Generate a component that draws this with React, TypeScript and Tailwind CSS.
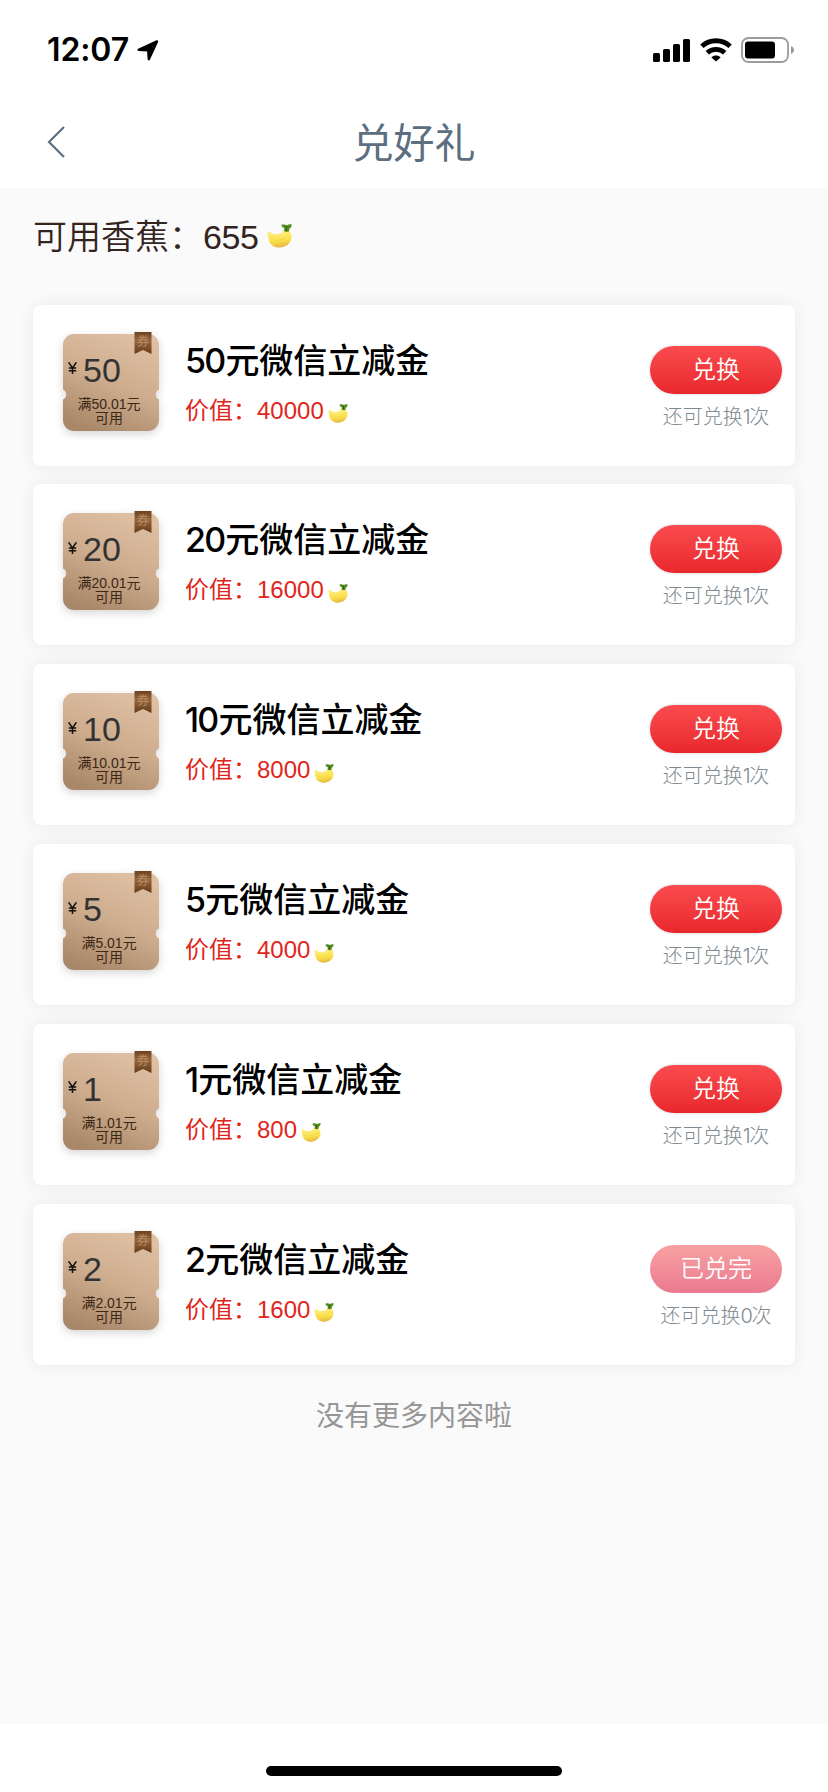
import React from 'react';

interface Gift {
    amount: string;
    limit: string;
    price: number;
    remain: number;
}

const GIFTS: Gift[] = [
    { amount: '50', limit: '50.01', price: 40000, remain: 1 },
    { amount: '20', limit: '20.01', price: 16000, remain: 1 },
    { amount: '10', limit: '10.01', price: 8000, remain: 1 },
    { amount: '5', limit: '5.01', price: 4000, remain: 1 },
    { amount: '1', limit: '1.01', price: 800, remain: 1 },
    { amount: '2', limit: '2.01', price: 1600, remain: 0 },
];

const Banana: React.FC<{ className?: string }> = ({ className }) => (
    <svg viewBox="0 0 24 23" className={className} fill="none">
        <defs>
            <linearGradient id="banana" x1="0.4" y1="0" x2="0.6" y2="1">
                <stop offset="0" stopColor="#fff08a" />
                <stop offset="0.6" stopColor="#fbe04a" />
                <stop offset="1" stopColor="#e3b443" />
            </linearGradient>
        </defs>
        <path d="M.5 8.6C.9 7.4 2.4 7 3.4 7.8C5.2 9.400 8 10.2 10.800 9.8C13.400 9.400 14.600 8 15.400 6.200L20.800 6.200C22.800 8.200 24 11 23.400 14C22.400 19 17.800 22.600 12.200 22.600C6.600 22.600 2.400 19.600 1.600 15C1.300 13 .1 10.600 .5 8.6Z" fill="url(#banana)" />
        <path d="M2.400 13.400C6.400 16.800 14.600 17 20 10.600" stroke="#e8c84a" strokeWidth=".8" opacity=".5" />
        <path d="M13.800 .8C15.800 0 17.800 .4 19.200 1.200C20.600 .2 22.400 0 23.800 .6C23.400 2.600 22.800 3.800 21.400 4.600L21.200 7C19.600 7.800 17.800 7.600 16.200 6.600L16.800 4.200C15.200 3.600 14 2.400 13.800 .8Z" fill="#548c22" />
        <path d="M18.800 2.200L18.400 6.600" stroke="#2f5f12" strokeWidth="1.2" />
    </svg>
);

const StatusBar: React.FC = () => (
    <div className="h-[98px] flex items-start justify-between pl-[47px] pr-[34px] pt-[33px]">
        <div className="flex items-center h-[34px]">
            <span className="font-['Inter',sans-serif] font-semibold text-[32px] leading-[34px] tracking-[-0.1px]">12:07</span>
            <svg viewBox="0 0 22 21" className="w-[22px] h-[21px] ml-[8px]">
                <path d="M20 1.400L11.800 19.200L11.200 10.400L1.600 9.800Z" fill="#000" stroke="#000" strokeWidth="2.4" strokeLinejoin="round" />
            </svg>
        </div>
        <div className="flex items-center h-[34px]">
            <svg viewBox="0 0 37 23" className="w-[37px] h-[23px]">
                <rect x="0" y="14" width="7" height="9" rx="1.6" />
                <rect x="10" y="10" width="7" height="13" rx="1.6" />
                <rect x="20" y="5" width="7" height="18" rx="1.6" />
                <rect x="30" y="0" width="7" height="23" rx="1.6" />
            </svg>
            <svg viewBox="0 0 32 24" className="w-[32px] h-[24px] ml-[10px]" fill="none" stroke="#000" strokeWidth="4.8">
                <path d="M1.9 8.2C9.6.9 22.4.9 30.1 8.2" />
                <path d="M7.3 14.8C12.2 10.3 19.8 10.3 24.7 14.8" />
                <path d="M16 23.6L11.4 19.4C14 17 18 17 20.6 19.4Z" fill="#000" stroke="none" />
            </svg>
            <svg viewBox="0 0 53 26" className="w-[53px] h-[26px] ml-[9px]">
                <rect x="1" y="1" width="46" height="24" rx="6.5" fill="none" stroke="#9b9b9b" strokeWidth="1.8" />
                <rect x="4" y="4.5" width="30" height="17" rx="3" />
                <path d="M50 9C52 9.8 53 11.2 53 13C53 14.8 52 16.2 50 17Z" fill="#9b9b9b" />
            </svg>
        </div>
    </div>
);

const Coupon: React.FC<{ amount: string; limit: string }> = ({ amount, limit }) => (
    <div className="relative w-[96px] h-[97px] shrink-0">
        <svg viewBox="0 0 96 99" className="absolute left-0 -top-[2px] w-[96px] h-[99px] drop-shadow-[0_3px_4px_rgba(0,0,0,0.16)]">
            <defs>
                <linearGradient id="coupon" x1="0.7" y1="0" x2="0.3" y2="1">
                    <stop offset="0" stopColor="#dfc0a4" />
                    <stop offset="0.5" stopColor="#ceac8e" />
                    <stop offset="1" stopColor="#a98769" />
                </linearGradient>
                <linearGradient id="ribbon" x1="0" y1="0" x2="0" y2="1">
                    <stop offset="0" stopColor="#6f421e" />
                    <stop offset="0.4" stopColor="#96683f" />
                    <stop offset="1" stopColor="#653a18" />
                </linearGradient>
            </defs>
            <path d="M11 2H85A11 11 0 0 1 96 13V57.500A5.500 5.500 0 0 0 96 67.500V88A11 11 0 0 1 85 99H11A11 11 0 0 1 0 88V67.500A5.500 5.500 0 0 0 0 57.500V13A11 11 0 0 1 11 2Z" fill="url(#coupon)" />
            <path d="M71.500 0H88.500V22L80 18L71.500 22Z" fill="url(#ribbon)" />
        </svg>
        <span className="absolute left-[74px] top-[1px] text-[12px] leading-[14px] text-[#b98d66]">券</span>
        <div className="relative flex items-center h-[74px] pl-[5px]">
            <svg viewBox="0 0 9 12" className="w-[9px] h-[12px] mr-[6px] -mt-[5px]" fill="none" stroke="#111" strokeWidth="1.5">
                <path d="M.6 .3L4.500 6L8.400 .3M4.500 6V12M.8 6H8.200M.8 8.700H8.200" />
            </svg>
            <span className="font-['Liberation_Sans',sans-serif] text-[34px] leading-none text-[#333] -mt-[2px]">{amount}</span>
        </div>
        <div className="relative -mt-[11px] -ml-[4px] text-center text-[14px] leading-[14px] text-[#3d2814] whitespace-nowrap">
            满{limit}元<br />可用
        </div>
    </div>
);

const GiftCard: React.FC<{ gift: Gift }> = ({ gift }) => {
    const soldOut = gift.remain === 0;

    return (
        <div className="h-[161px] bg-white rounded-[8px] shadow-[0_0_18px_rgba(0,0,0,0.07)] flex items-start pl-[30px] pr-[13px] pt-[29px]">
            <Coupon amount={gift.amount} limit={gift.limit} />
            <div className="flex-1 ml-[26px]">
                <div className="flex items-baseline mt-[2px] text-[34px] leading-[50px] font-medium text-black">
                    <span className="font-['Inter',sans-serif] tracking-[-1.8px] mr-[1px]">{gift.amount}</span>元微信立减金
                </div>
                <div className="flex items-center mt-[7px] text-[24px] leading-[36px] text-[#e1251b]">
                    价值：<span>{gift.price}</span>
                    <Banana className="w-[20px] h-[19px] ml-[4px] mt-[6px]" />
                </div>
            </div>
            <div className="w-[132px] mt-[12px] flex flex-col items-center">
                <button
                    className={
                        soldOut
                            ? 'w-[132px] h-[48px] rounded-full text-white text-[24px] leading-[46px] font-[350] bg-gradient-to-b from-[#f7a1a2] to-[#ea7a90]'
                            : 'w-[132px] h-[48px] rounded-full text-white text-[24px] leading-[46px] font-[350] bg-gradient-to-b from-[#fa4b4e] to-[#e8272c] shadow-[0_0_3px_rgba(90,110,130,0.35)]'
                    }
                >
                    {soldOut ? '已兑完' : '兑换'}
                </button>
                <div className="mt-[8px] text-[20px] leading-[30px] font-light text-[#7f8a90] whitespace-nowrap">
                    还可兑换<span className="font-['Inter',sans-serif] tracking-[-1.2px]">{gift.remain}</span>次
                </div>
            </div>
        </div>
    );
};

export default function App() {
    return (
        <div className="w-[828px] h-[1792px] bg-white flex flex-col overflow-hidden font-['Liberation_Sans','Noto_Sans_CJK_SC',sans-serif]">
            <StatusBar />

            {/* Nav bar */}
            <div className="relative h-[90px] flex items-center justify-center">
                <svg viewBox="0 0 18 32" className="absolute left-[47px] top-[28px] w-[18px] h-[32px]" fill="none" stroke="#5c7083" strokeWidth="2.2">
                    <path d="M17 1L2 16L17 31" />
                </svg>
                <h1 className="text-[41px] leading-[60px] text-[#5c6e80] mt-[1px]">兑好礼</h1>
            </div>

            <div className="h-[1536px] bg-[#fafafa] px-[33px]">
                <div className="flex items-center h-[98px] text-[34px] font-[350] text-[#33241e]">
                    可用香蕉：<span className="tracking-[-0.4px]">655</span>
                    <Banana className="w-[25px] h-[24px] ml-[8px] -mt-[2px]" />
                </div>

                <div className="flex flex-col gap-[18.8px] mt-[18.7px]">
                    {GIFTS.map(gift => (
                        <GiftCard key={gift.amount} gift={gift} />
                    ))}
                </div>

                <div className="mt-[31px] text-center text-[28px] leading-[42px] text-[#969696]">没有更多内容啦</div>
            </div>

            {/* Home indicator */}
            <div className="flex-1 flex justify-center items-start pt-[42px]">
                <div className="w-[296px] h-[10px] rounded-full bg-black" />
            </div>
        </div>
    );
}
